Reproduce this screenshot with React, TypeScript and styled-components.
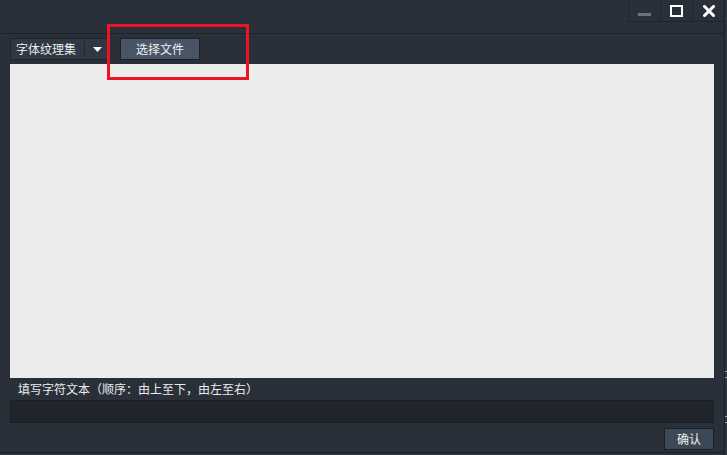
import React from "react";
import styled, { createGlobalStyle } from "styled-components";

const Global = createGlobalStyle`
  html, body { margin: 0; padding: 0; background: #29303a; }
  body { font-family: "Noto Sans CJK SC", "Noto Sans", sans-serif; }
`;

const Window = styled.div`
  position: relative;
  width: 727px;
  height: 455px;
  display: flex;
  background: #29303a;
  overflow: hidden;
`;

const Main = styled.div`
  width: 724px;
  display: flex;
  flex-direction: column;
`;

const Edge = styled.div`
  width: 2px;
  border-left: 1px solid #1c2127;
  background: #2d353f;
  display: flex;
  flex-direction: column;
  padding-top: 371px;
  gap: 5px;
`;

const Tick = styled.div<{ $gap?: number }>`
  width: 2px;
  height: 1px;
  background: #9aa3ad;
  margin-top: ${(p) => p.$gap ?? 0}px;
`;

const TitleBar = styled.div`
  height: 33px;
  border-bottom: 1px solid #1d2229;
  display: flex;
  justify-content: flex-end;
  align-items: flex-start;
`;

const WinButton = styled.div`
  width: 31px;
  height: 21px;
  border-left: 1px solid #1f252c;
  border-bottom: 1px solid #1f252c;
  display: flex;
  align-items: center;
  justify-content: center;
`;

const MinBar = styled.div`
  width: 13px;
  height: 3px;
  background: #6c7279;
  margin-top: 7px;
`;

const MaxBox = styled.div`
  width: 9px;
  height: 8px;
  border: 2px solid #ffffff;
`;

const Body = styled.div`
  padding: 4px 0 0 10px;
  display: flex;
  flex-direction: column;
  width: 704px;
`;

const Toolbar = styled.div`
  display: flex;
  height: 22px;
  gap: 10px;
`;

const Dropdown = styled.div`
  width: 98px;
  height: 20px;
  border: 1px solid #1e242a;
  background: #2f3843;
  display: flex;
  align-items: center;
  color: #eeeeee;
  font-size: 12px;
`;

const DropLabel = styled.div`
  flex: 1;
  padding-left: 5px;
  line-height: 20px;
`;

const DropArrow = styled.div`
  width: 24px;
  height: 14px;
  border-left: 1px solid #222830;
  display: flex;
  align-items: center;
  justify-content: center;
`;

const Button = styled.div<{ $w: number; $bg: string }>`
  width: ${(p) => p.$w}px;
  height: 20px;
  border: 1px solid #1c2127;
  background: ${(p) => p.$bg};
  color: #f0f0f0;
  font-size: 12px;
  line-height: 20px;
  text-align: center;
`;

const Canvas = styled.div`
  margin-top: 4px;
  height: 314px;
  background: #ececec;
`;

const Label = styled.div`
  height: 22px;
  line-height: 21px;
  padding-left: 8px;
  color: #ececec;
  font-size: 12px;
`;

const Input = styled.div`
  height: 21px;
  border: 1px solid #1b1f24;
  background: #20252b;
`;

const Footer = styled.div`
  display: flex;
  justify-content: flex-end;
  padding-top: 5px;
`;

const BottomLine = styled.div`
  margin-top: auto;
  height: 2px;
  border-top: 1px solid #1c2127;
  background: #2b323c;
`;

const Annotation = styled.div`
  position: absolute;
  left: 107px;
  top: 24px;
  width: 136px;
  height: 50px;
  border: 3px solid #ea1521;
  pointer-events: none;
`;

export default function App() {
  return (
    <>
      <Global />
      <Window>
        <Main>
          <TitleBar>
            <WinButton>
              <MinBar />
            </WinButton>
            <WinButton>
              <MaxBox />
            </WinButton>
            <WinButton>
              <svg width="12" height="12" viewBox="0 0 12 12">
                <path d="M1.5 1.5 L10.5 10.5 M10.5 1.5 L1.5 10.5" stroke="#fff" strokeWidth="3" strokeLinecap="square" />
              </svg>
            </WinButton>
          </TitleBar>
          <Body>
            <Toolbar>
              <Dropdown>
                <DropLabel>字体纹理集</DropLabel>
                <DropArrow>
                  <svg width="9" height="5" viewBox="0 0 9 5">
                    <path d="M0 0 H9 L4.5 5 Z" fill="#ffffff" />
                  </svg>
                </DropArrow>
              </Dropdown>
              <Button $w={78} $bg="#485566">选择文件</Button>
            </Toolbar>
            <Canvas />
            <Label>填写字符文本（顺序：由上至下，由左至右）</Label>
            <Input />
            <Footer>
              <Button $w={48} $bg="#3d4856">确认</Button>
            </Footer>
          </Body>
          <BottomLine />
        </Main>
        <Edge>
          <Tick />
          <Tick />
          <Tick $gap={33} />
          <Tick />
        </Edge>
        <Annotation />
      </Window>
    </>
  );
}
